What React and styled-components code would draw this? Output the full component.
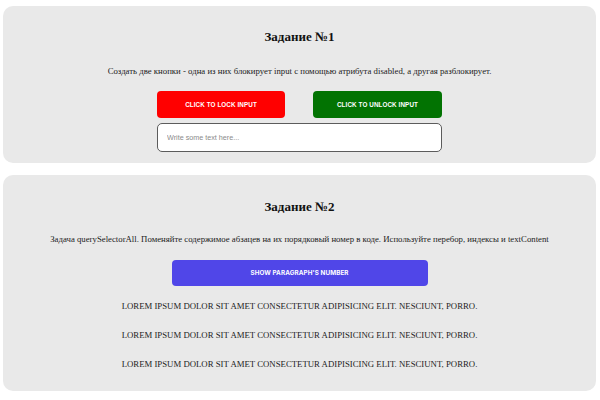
import React from "react";
import styled, { createGlobalStyle } from "styled-components";

const Global = createGlobalStyle`
  html, body { margin: 0; padding: 0; background: #ffffff; }
  body { font-family: "Liberation Serif", "Times New Roman", serif; color: #1a1a1a; }
`;

const Page = styled.div`
  display: flex;
  flex-direction: column;
  gap: 12px;
  padding: 6px 4px 0 3px;
`;

const Card = styled.section`
  background: #e9e9e9;
  border-radius: 10px;
  display: flex;
  flex-direction: column;
  align-items: center;
  padding: ${(p) => p.$pad};
`;

const Title = styled.h2`
  margin: 0;
  font-family: "Liberation Serif", serif;
  font-weight: bold;
  font-size: 13px;
  line-height: 16px;
  color: #111;
`;

const Text = styled.p`
  margin: ${(p) => p.$mt || 0} 0 0;
  font-size: 8.75px;
  line-height: 11px;
  color: #1c1c1c;
  white-space: nowrap;
  text-transform: ${(p) => (p.$upper ? "uppercase" : "none")};
`;

const ButtonRow = styled.div`
  display: flex;
  gap: 28px;
  margin-top: 13.5px;
`;

const ActionButton = styled.button`
  width: ${(p) => p.$w}px;
  height: ${(p) => p.$h || 27}px;
  margin-top: ${(p) => p.$mt || 0};
  border: none;
  border-radius: 4px;
  background: ${(p) => p.$bg};
  color: #fff;
  font-family: ${(p) => p.$font || '"Liberation Sans", Arial, sans-serif'};
  font-weight: bold;
  font-size: 6.3px;
  text-transform: uppercase;
  letter-spacing: 0.1px;
  cursor: pointer;
`;

const TextInput = styled.input`
  box-sizing: border-box;
  width: 285px;
  height: 29px;
  margin-top: 5px;
  padding: 0 9px;
  border: 1.5px solid #5c5c5c;
  border-radius: 5px;
  background: #fff;
  font-family: "Liberation Sans", Arial, sans-serif;
  font-size: 7.2px;
  outline: none;
  &::placeholder { color: #8a8a8a; }
`;

const lorem = "Lorem ipsum dolor sit amet consectetur adipisicing elit. Nesciunt, porro.";

export default function App() {
  return (
    <>
      <Global />
      <Page>
        <Card $pad="23px 0 11px">
          <Title>Задание №1</Title>
          <Text $mt="21px">
            Создать две кнопки - одна из них блокирует input с помощью атрибута disabled, а другая разблокирует.
          </Text>
          <ButtonRow>
            <ActionButton $w={128} $bg="#ff0000">Click to lock input</ActionButton>
            <ActionButton $w={129} $bg="#027302">Click to unlock input</ActionButton>
          </ButtonRow>
          <TextInput placeholder="Write some text here..." />
        </Card>
        <Card $pad="24px 0 20.5px">
          <Title>Задание №2</Title>
          <Text $mt="19.5px">
            Задача querySelectorAll. Поменяйте содержимое абзацев на их порядковый номер в коде. Используйте перебор, индексы и textContent
          </Text>
          <ActionButton $w={256} $h={26} $mt="14.5px" $bg="#5046e8" $font='Inter, "Noto Sans", sans-serif'>
            Show paragraph's number
          </ActionButton>
          <Text $upper $mt="15.5px">{lorem}</Text>
          <Text $upper $mt="18px">{lorem}</Text>
          <Text $upper $mt="18px">{lorem}</Text>
        </Card>
      </Page>
    </>
  );
}
